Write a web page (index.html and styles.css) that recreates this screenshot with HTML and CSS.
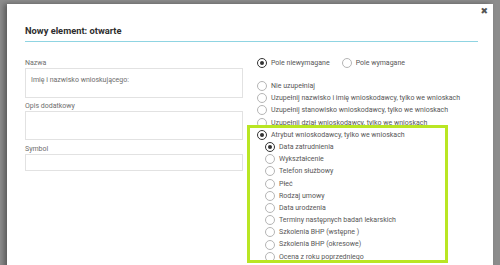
FILE: index.html
```html
<!DOCTYPE html>
<html lang="pl">
<head>
<meta charset="utf-8">
<link rel="stylesheet" href="styles.css">
</head>
<body>
<div class="modal">
  <button class="close" aria-label="Zamknij">✖</button>
  <div class="header">Nowy element: otwarte</div>
  <div class="content">
    <div class="left">
      <label class="lbl">Nazwa</label>
      <div class="field f1">Imię i nazwisko wnioskującego:</div>
      <label class="lbl">Opis dodatkowy</label>
      <div class="field f2"></div>
      <label class="lbl">Symbol</label>
      <div class="field f3"></div>
    </div>
    <div class="right">
      <div class="req">
        <span class="opt"><span class="radio on"></span>Pole niewymagane</span>
        <span class="opt"><span class="radio"></span>Pole wymagane</span>
      </div>
      <div class="list">
        <div class="opt"><span class="radio"></span>Nie uzupełniaj</div>
        <div class="opt"><span class="radio"></span>Uzupełnij nazwisko i imię wnioskodawcy, tylko we wnioskach</div>
        <div class="opt"><span class="radio"></span>Uzupełnij stanowisko wnioskodawcy, tylko we wnioskach</div>
        <div class="opt"><span class="radio"></span>Uzupełnij dział wnioskodawcy, tylko we wnioskach</div>
        <div class="opt"><span class="radio on"></span>Atrybut wnioskodawcy, tylko we wnioskach</div>
        <div class="sub">
          <div class="opt"><span class="radio on"></span>Data zatrudnienia</div>
          <div class="opt"><span class="radio"></span>Wykształcenie</div>
          <div class="opt"><span class="radio"></span>Telefon służbowy</div>
          <div class="opt"><span class="radio"></span>Płeć</div>
          <div class="opt"><span class="radio"></span>Rodzaj umowy</div>
          <div class="opt"><span class="radio"></span>Data urodzenia</div>
          <div class="opt"><span class="radio"></span>Terminy następnych badań lekarskich</div>
          <div class="opt"><span class="radio"></span>Szkolenia BHP (wstępne )</div>
          <div class="opt"><span class="radio"></span>Szkolenia BHP (okresowe)</div>
          <div class="opt"><span class="radio"></span>Ocena z roku poprzedniego</div>
        </div>
      </div>
      <div class="highlight"></div>
    </div>
  </div>
</div>
</body>
</html>
```
FILE: styles.css
```css
html, body {
  margin: 0;
  height: 265px;
  overflow: hidden;
}
body {
  background: #8c8c8c;
  font-family: Roboto, "Liberation Sans", sans-serif;
  color: #575757;
}
.modal {
  position: relative;
  margin: 4px 0 0 7px;
  width: 486px;
  height: 300px;
  background: #fff;
  box-shadow: -3px 0 5px rgba(0,0,0,0.35);
  box-sizing: border-box;
  padding: 0 15px 0 18px;
}
.close {
  position: absolute;
  top: 2px;
  right: 5px;
  border: 0;
  background: none;
  padding: 0;
  font-size: 9px;
  line-height: 10px;
  color: #555;
  font-family: "DejaVu Sans", sans-serif;
}
.header {
  padding-top: 21px;
  height: 12px;
  padding-bottom: 4px;
  border-bottom: 1px solid #8fd4e2;
  font-size: 9.3px;
  font-weight: 700;
  color: #2e2e2e;
  line-height: 12px;
}
.content {
  display: flex;
  position: relative;
}
.left {
  width: 218px;
  padding-top: 17px;
  display: flex;
  flex-direction: column;
}
.lbl {
  font-size: 7px;
  line-height: 9px;
  color: #6e6e6e;
}
.field {
  border: 1px solid #e2e2e2;
  box-sizing: border-box;
  font-size: 7px;
  color: #6e6e6e;
  padding: 7px 5px;
  line-height: 9px;
}
.f1 { height: 30px; margin-bottom: 4px; }
.f2 { height: 29px; margin-bottom: 5px; }
.f3 { height: 17px; }
.right {
  flex: 1;
  padding-left: 14px;
  padding-top: 15px;
  position: relative;
}
.req {
  display: flex;
  gap: 12px;
  margin-bottom: 11px;
}
.opt {
  display: flex;
  align-items: center;
  font-size: 7px;
  line-height: 12.2px;
  height: 12.2px;
  white-space: nowrap;
}
.req .opt { height: 12px; }
.radio {
  width: 8px;
  height: 8px;
  border: 1px solid #b5b5b5;
  border-radius: 50%;
  margin-right: 4px;
  position: relative;
  flex: none;
}
.radio.on {
  border-color: #333;
  border-width: 1.2px;
}
.radio.on::after {
  content: "";
  position: absolute;
  left: 2px;
  top: 2px;
  width: 4px;
  height: 4px;
  border-radius: 50%;
  background: #333;
}
.sub { padding-left: 8px; }
.highlight {
  position: absolute;
  left: 4px;
  top: 83px;
  width: 195px;
  height: 132px;
  border: 3px solid #b9e623;
}
```
